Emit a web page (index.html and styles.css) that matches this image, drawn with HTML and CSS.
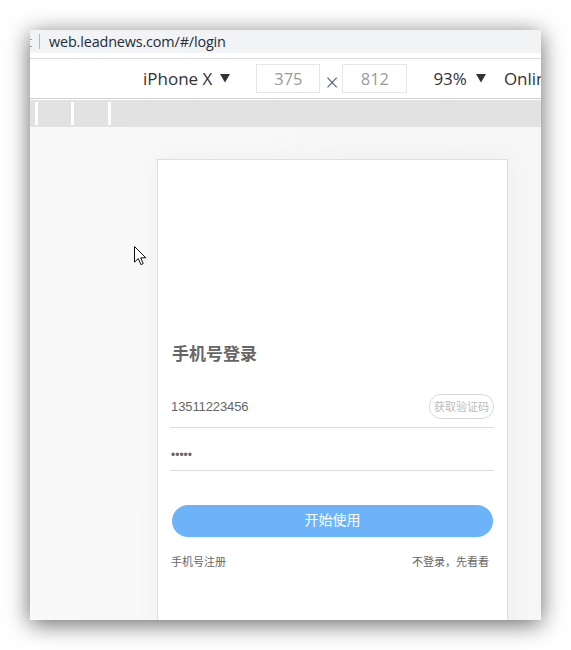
FILE: index.html
```html
<!DOCTYPE html>
<html lang="zh-CN">
<head>
<meta charset="utf-8">
<title>login</title>
<link rel="stylesheet" href="styles.css">
</head>
<body>
<div class="window">
  <div class="chrome">
    <div class="addr">
      <span class="cut">t</span>
      <span class="sep"></span>
      <span class="url">web.leadnews.com/#/login</span>
    </div>
    <div class="toolbar">
      <span class="device">iPhone X</span>
      <svg class="tri" width="10" height="9" viewBox="0 0 10 9"><path d="M0 0H10L5 8.5Z" fill="#333"/></svg>
      <span class="dim">375</span>
      <span class="times">×</span>
      <span class="dim">812</span>
      <span class="zoom">93%</span>
      <svg class="tri tri2" width="10" height="9" viewBox="0 0 10 9"><path d="M0 0H10L5 8.5Z" fill="#333"/></svg>
      <span class="online">Online</span>
    </div>
    <div class="ruler">
      <span class="tick t1"></span>
      <span class="tick t2"></span>
      <span class="tick t3"></span>
    </div>
  </div>
  <div class="viewport">
    <svg class="cursor" width="13" height="20" viewBox="0 0 13 20"><path d="M0.5 0.5V16.2L4.3 12.6L6.9 18.6L9.2 17.6L6.7 11.8H11.8Z" fill="#fff" stroke="#111" stroke-width="1" stroke-linejoin="miter"/></svg>
    <div class="phone">
      <h2 class="title">手机号登录</h2>
      <div class="field">
        <span class="value">13511223456</span>
        <button class="code">获取验证码</button>
      </div>
      <div class="field pwd">
        <span class="dots">•••••</span>
      </div>
      <button class="submit">开始使用</button>
      <div class="links">
        <span>手机号注册</span>
        <span>不登录，先看看</span>
      </div>
    </div>
  </div>
</div>
</body>
</html>
```

FILE: styles.css
```css
html, body {
  margin: 0;
  padding: 0;
  background: #fff;
}
body {
  padding: 30px 0 0 30px;
  width: 571px;
  height: 650px;
  box-sizing: border-box;
  overflow: hidden;
}
.window {
  position: relative;
  width: 511px;
  height: 590px;
  background: #f7f7f7;
  overflow: hidden;
  box-shadow: 0 4px 22px rgba(0, 0, 0, 0.6);
}
.chrome {
  background: #fff;
}
.addr {
  height: 23px;
  background: #f1f3f4;
  display: flex;
  align-items: center;
  font-family: "Open Sans", "Noto Sans", sans-serif;
  white-space: nowrap;
  margin-bottom: 5px;
}
.cut {
  font-size: 14px;
  color: #8a8a8a;
  margin-left: -3px;
  width: 6px;
  overflow: hidden;
  display: inline-block;
}
.sep {
  width: 1px;
  height: 15px;
  background: #b8b8b8;
  margin-left: 6px;
}
.url {
  margin-left: 9px;
  font-size: 14.4px;
  color: #232c3a;
  letter-spacing: -0.15px;
}
.toolbar {
  height: 39px;
  border-top: 1px solid #dcdcdc;
  border-bottom: 1px solid #cfcfcf;
  display: flex;
  align-items: center;
  white-space: nowrap;
  font-family: "Open Sans", "Noto Sans", sans-serif;
  color: #333;
  font-size: 17px;
  overflow: hidden;
}
.toolbar > * {
  flex-shrink: 0;
}
.device {
  margin-left: 113px;
}
.tri {
  margin-left: 8px;
}
.tri2 {
  margin-left: 9px;
}
.dim {
  width: 62px;
  height: 27px;
  border: 1px solid #e6e6e6;
  text-align: center;
  line-height: 27px;
  color: #9a9a9a;
  margin-left: 26px;
  font-size: 16.5px;
}
.dim + .times + .dim {
  margin-left: 5px;
  width: 63px;
}
.times {
  margin-left: 5px;
  margin-top: 6px;
  font-size: 23px;
  line-height: 20px;
  font-weight: 300;
  color: #555;
  width: 12px;
}
.zoom {
  margin-left: 26px;
}
.online {
  margin-left: 18px;
}
.ruler {
  margin-top: 1px;
  height: 27px;
  background: #e2e2e2;
  display: flex;
  align-items: center;
}
.tick {
  width: 3px;
  height: 23px;
  background: #fff;
}
.t1 { margin-left: 5px; }
.t2 { margin-left: 33px; }
.t3 { margin-left: 34px; }
.viewport {
  position: relative;
  height: 463px;
  padding: 32px 0 0 127px;
  background: linear-gradient(90deg, #f9f9f9 0%, #f6f6f6 100%);
}
.cursor {
  position: absolute;
  left: 104px;
  top: 119px;
}
.phone {
  width: 324px;
  min-height: 470px;
  background: #fff;
  border: 1px solid #dedede;
  padding: 181px 13px 0 12px;
  box-shadow: 0 0 24px rgba(0, 0, 0, 0.04);
  font-family: "Liberation Sans", "Noto Sans CJK SC", sans-serif;
}
.title {
  margin: 0 0 20px 2px;
  font-size: 17px;
  line-height: 24px;
  font-weight: bold;
  color: #666;
  font-family: "Noto Sans CJK SC", sans-serif;
}
.field {
  height: 42px;
  border-bottom: 1px solid #dcdcdc;
  display: flex;
  align-items: center;
  justify-content: space-between;
}
.value {
  margin-left: 1px;
  font-size: 13px;
  color: #666;
  letter-spacing: -0.1px;
}
.code {
  width: 65px;
  height: 25px;
  box-sizing: border-box;
  border: 1px solid #d8d8d8;
  border-radius: 12px;
  background: #fff;
  color: #bcbcbc;
  font-size: 11px;
  padding: 0;
  font-family: "Noto Sans CJK SC", sans-serif;
  line-height: 23px;
}
.pwd {
  height: 30px;
  padding-top: 12px;
}
.dots {
  margin-left: 1px;
  font-size: 12px;
  color: #666;
}
.submit {
  display: block;
  margin: 34px 0 0 2px;
  width: 321px;
  height: 32px;
  border: none;
  border-radius: 16px;
  background: #6cb3fa;
  color: #fff;
  font-size: 14px;
  line-height: 28px;
  padding: 0 0 4px;
  font-family: "Noto Sans CJK SC", sans-serif;
}
.links {
  margin-top: 17px;
  display: flex;
  justify-content: space-between;
  padding: 0 5px 0 1px;
  font-size: 11px;
  line-height: 15px;
  color: #666;
  font-family: "Noto Sans CJK SC", sans-serif;
}
```
